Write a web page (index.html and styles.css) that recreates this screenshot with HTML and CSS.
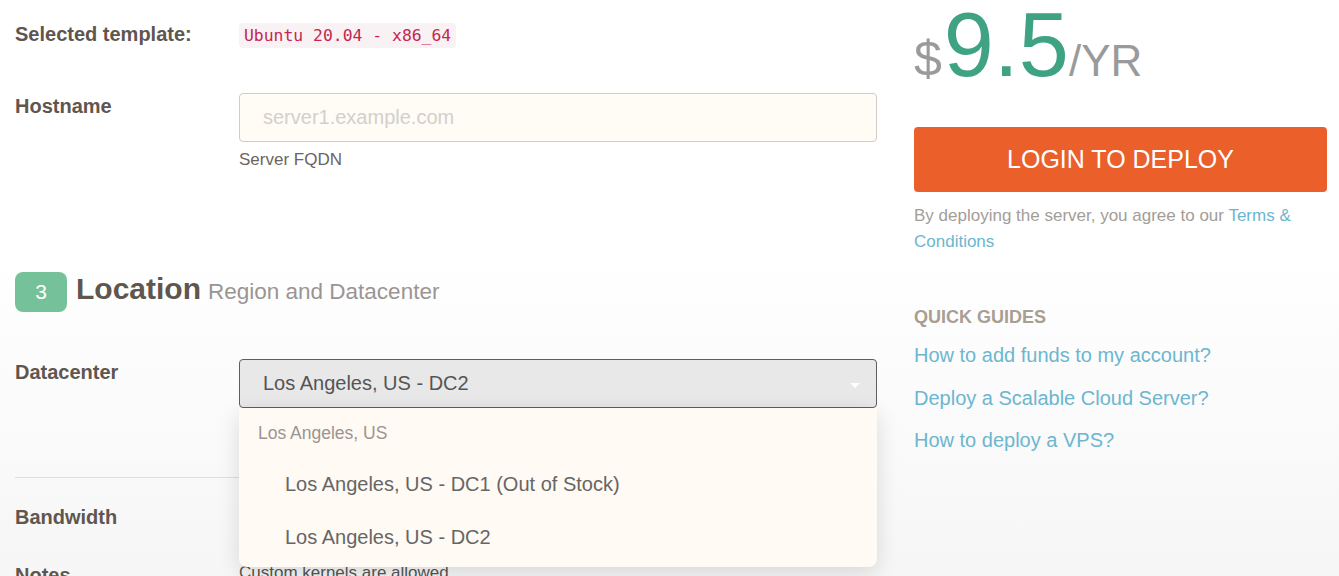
FILE: index.html
```html
<!DOCTYPE html>
<html lang="en">
<head>
<meta charset="utf-8">
<title>Deploy</title>
<link rel="stylesheet" href="styles.css">
</head>
<body>
<div class="page">
  <main class="main">
    <div class="row row-template">
      <div class="label">Selected template:</div>
      <div class="field"><code class="chip">Ubuntu 20.04 - x86_64</code></div>
    </div>

    <div class="row row-host">
      <label class="label" for="host">Hostname</label>
      <div class="field">
        <input class="input" id="host" type="text" placeholder="server1.example.com">
        <div class="help">Server FQDN</div>
      </div>
    </div>

    <h2 class="section-title">
      <span class="badge">3</span>
      <span class="title">Location</span>
      <span class="subtitle">Region and Datacenter</span>
    </h2>

    <div class="row row-dc">
      <div class="label">Datacenter</div>
      <div class="field select-wrap">
        <div class="select">Los Angeles, US - DC2<span class="caret"></span></div>
        <div class="dropdown">
          <div class="group">Los Angeles, US</div>
          <div class="option">Los Angeles, US - DC1 (Out of Stock)</div>
          <div class="option">Los Angeles, US - DC2</div>
        </div>
      </div>
    </div>

    <hr class="divider">

    <div class="row row-bw">
      <div class="label">Bandwidth</div>
      <div class="field"></div>
    </div>

    <div class="row row-notes">
      <div class="label">Notes</div>
      <div class="field"><div class="help help-dark">Custom kernels are allowed</div></div>
    </div>
  </main>

  <aside class="sidebar">
    <div class="price"><span class="cur">$</span><span class="amount">9.5</span><span class="per">/YR</span></div>
    <button class="deploy-btn" type="button">LOGIN TO DEPLOY</button>
    <p class="terms">By deploying the server, you agree to our <a href="#" class="link">Terms &amp; Conditions</a></p>
    <h3 class="guides-title">QUICK GUIDES</h3>
    <ul class="guides">
      <li><a href="#" class="link">How to add funds to my account?</a></li>
      <li><a href="#" class="link">Deploy a Scalable Cloud Server?</a></li>
      <li><a href="#" class="link">How to deploy a VPS?</a></li>
    </ul>
  </aside>
</div>
</body>
</html>
```

FILE: styles.css
```css
* { box-sizing: border-box; }

html, body {
  margin: 0;
  padding: 0;
}

body {
  min-height: 100vh;
  font-family: "Liberation Sans", Arial, sans-serif;
  color: #5f564f;
  background: linear-gradient(to bottom, #ffffff 0px, #ffffff 256px, #f6f6f6 576px);
  overflow: hidden;
}

.page {
  display: flex;
  align-items: flex-start;
  gap: 37px;
  padding: 0 12px 0 15px;
}

/* ---------- main column ---------- */
.main {
  width: 862px;
  flex: none;
  padding-top: 21px;
}

.row {
  display: grid;
  grid-template-columns: 224px 1fr;
  align-items: start;
}

.label {
  font-size: 20px;
  font-weight: bold;
  line-height: 26px;
  color: #5f564f;
}

.field {
  min-width: 0;
}

.chip {
  display: inline-block;
  margin-top: 2px;
  height: 25px;
  padding: 0 5px;
  font-family: "DejaVu Sans Mono", "Liberation Mono", monospace;
  font-size: 16.4px;
  line-height: 25px;
  color: #c7254e;
  background: #f9f2f4;
  border-radius: 4px;
}

.row-host {
  margin-top: 45px;
}

.input {
  display: block;
  width: 100%;
  height: 49px;
  padding: 0 23px;
  font-family: "Liberation Sans", Arial, sans-serif;
  font-size: 20px;
  color: #555;
  background: #fffbf5;
  border: 1px solid #d4ccc4;
  border-radius: 4px;
  outline: none;
}

.input::placeholder {
  color: #d2d0cd;
}

.help {
  margin-top: 7px;
  font-size: 17px;
  line-height: 22px;
  color: #6a6561;
}

.help-dark {
  margin-top: 0;
  color: #555;
}

.section-title {
  display: flex;
  align-items: baseline;
  margin: 100px 0 0;
  font-weight: normal;
}

.badge {
  width: 52px;
  height: 40px;
  line-height: 40px;
  text-align: center;
  font-size: 21px;
  color: #fff;
  background: #75c29a;
  border-radius: 8px;
}

.title {
  margin-left: 9px;
  font-size: 30px;
  font-weight: bold;
  line-height: 35px;
  color: #5f564f;
}

.subtitle {
  margin-left: 7px;
  font-size: 22.5px;
  line-height: 26px;
  color: #9a9593;
}

.row-dc {
  margin-top: 47px;
}

.select-wrap {
  position: relative;
}

.select {
  position: relative;
  height: 49px;
  padding: 0 23px;
  font-size: 20px;
  line-height: 47px;
  color: #555;
  background: #e8e8e8;
  border: 1px solid #5e5e5e;
  border-radius: 4px;
}

.caret {
  position: absolute;
  right: 16px;
  top: 23px;
  width: 0;
  height: 0;
  border-left: 5px solid transparent;
  border-right: 5px solid transparent;
  border-top: 5px solid #ffffff;
}

.dropdown {
  position: absolute;
  left: 0;
  right: 0;
  top: 49px;
  z-index: 5;
  padding-bottom: 3px;
  background: #fffaf3;
  border-radius: 0 0 8px 8px;
  box-shadow: 0 6px 22px rgba(0, 0, 0, 0.13);
}

.group {
  height: 50px;
  padding-left: 19px;
  font-size: 17.5px;
  line-height: 50px;
  color: #9a9591;
}

.option {
  height: 53px;
  padding-left: 46px;
  font-size: 20px;
  line-height: 53px;
  color: #666;
}

.divider {
  margin: 69px 0 0;
  border: 0;
  border-top: 1px solid #dedede;
}

.row-bw {
  margin-top: 26px;
}

.row-notes {
  margin-top: 32px;
}

/* ---------- sidebar ---------- */
.sidebar {
  width: 413px;
  flex: none;
}

.price {
  height: 90px;
  font-size: 90px;
  line-height: 90px;
  white-space: nowrap;
}

.cur {
  font-size: 50px;
  line-height: 1;
  color: #9a9a9a;
}

.amount {
  margin-left: 2px;
  color: #3fa283;
}

.per {
  font-size: 44px;
  line-height: 1;
  color: #9a9a9a;
}

.deploy-btn {
  display: block;
  width: 100%;
  height: 65px;
  margin-top: 37px;
  padding: 0;
  font-family: "Liberation Sans", Arial, sans-serif;
  font-size: 25px;
  color: #fff;
  background: #ea5f2a;
  border: 0;
  border-radius: 4px;
}

.terms {
  margin: 11px 0 0;
  font-size: 17px;
  line-height: 26px;
  color: #a29d99;
}

.link {
  color: #6cb6d0;
  text-decoration: none;
}

.guides-title {
  margin: 50px 0 0;
  font-size: 18px;
  font-weight: bold;
  line-height: 24px;
  color: #a89e93;
}

.guides {
  list-style: none;
  margin: 5px 0 0;
  padding: 0;
}

.guides li {
  font-size: 20px;
  line-height: 42.5px;
}
```
